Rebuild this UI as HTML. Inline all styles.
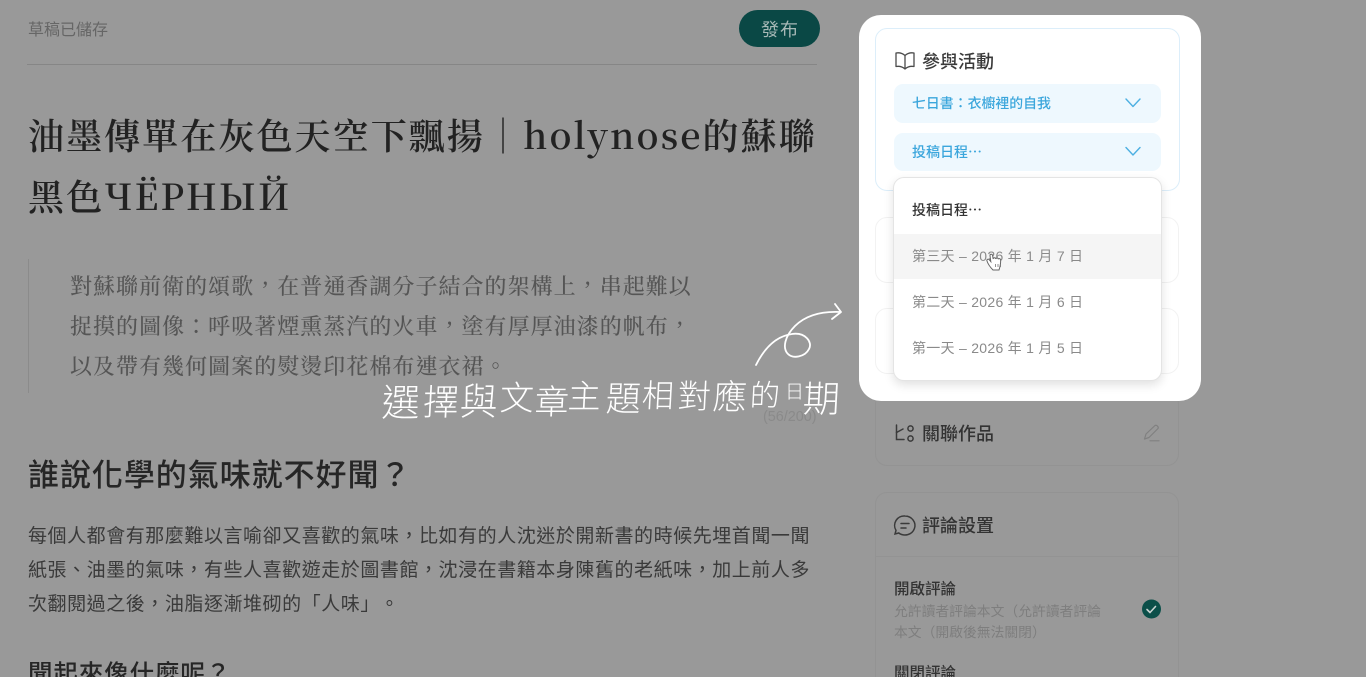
<!DOCTYPE html>
<html lang="zh-TW">
<head>
<meta charset="utf-8">
<title>草稿</title>
<style>
html,body{margin:0;padding:0;width:1366px;height:677px;overflow:hidden;background:#999;}
body{position:relative;font-family:"Liberation Sans","Noto Sans CJK TC",sans-serif;color:#2b2b2b;text-spacing-trim:space-all;}
.t{position:absolute;white-space:nowrap;line-height:1;filter:blur(.25px);}
.b{position:absolute;box-sizing:border-box;}
.serif{font-family:"Noto Serif CJK SC","Noto Serif CJK TC",serif;}
.sans{font-family:"Noto Sans CJK TC",sans-serif;}
svg{position:absolute;overflow:visible;}
.h{position:absolute;top:0;color:#fff;font-family:"Noto Sans CJK TC",sans-serif;font-weight:300;line-height:1;display:inline-block;}
</style>
</head>
<body>
<!-- main column -->
<div class="t sans" style="left:28px;top:20px;font-size:16px;color:#666;">草稿已儲存</div>
<div class="b" style="left:739px;top:10px;width:81px;height:37px;border-radius:19px;background:#0a4845;"></div>
<div class="t sans" style="left:761px;top:20px;font-size:18px;letter-spacing:1px;color:#a8b9b7;">發布</div>
<div class="b" style="left:27px;top:64px;width:790px;height:1px;background:#868686;"></div>

<div class="t serif" style="left:28px;top:113px;font-size:36px;letter-spacing:2.08px;color:#222;line-height:44px;font-weight:600;">油墨傳單在灰色天空下飄揚｜holynose的蘇聯</div>
<div class="t serif" style="left:28px;top:174px;font-size:36px;letter-spacing:2.08px;color:#222;line-height:44px;font-weight:600;">黑色ЧЁРНЫЙ</div>

<div class="b" style="left:28px;top:259px;width:1px;height:134px;background:#8b8b8b;"></div>
<div class="t serif" style="left:70px;top:272px;font-size:22px;letter-spacing:1.03px;line-height:28px;color:#555;font-weight:500;">對蘇聯前衛的頌歌，在普通香調分子結合的架構上，串起難以</div>
<div class="t serif" style="left:70px;top:312px;font-size:22px;letter-spacing:1.03px;line-height:28px;color:#555;font-weight:500;">捉摸的圖像：呼吸著煙熏蒸汽的火車，塗有厚厚油漆的帆布，</div>
<div class="t serif" style="left:70px;top:352px;font-size:22px;letter-spacing:1.03px;line-height:28px;color:#555;font-weight:500;">以及帶有幾何圖案的熨燙印花棉布連衣裙。</div>
<div class="t" style="left:763px;top:410px;font-size:14.400px;color:#8a8a8a;">(56/200)</div>

<div class="t sans" style="left:28px;top:455px;font-size:31px;letter-spacing:.95px;line-height:36px;font-weight:500;color:#262626;">誰說化學的氣味就不好聞？</div>
<div class="t sans" style="left:28px;top:521px;font-size:19px;letter-spacing:.55px;line-height:28px;color:#3a3a3a;">每個人都會有那麼難以言喻卻又喜歡的氣味，比如有的人沈迷於開新書的時候先埋首聞一聞</div>
<div class="t sans" style="left:28px;top:555px;font-size:19px;letter-spacing:.55px;line-height:28px;color:#3a3a3a;">紙張、油墨的氣味，有些人喜歡遊走於圖書館，沈浸在書籍本身陳舊的老紙味，加上前人多</div>
<div class="t sans" style="left:28px;top:589px;font-size:19px;letter-spacing:.55px;line-height:28px;color:#3a3a3a;">次翻閱過之後，油脂逐漸堆砌的「人味」。</div>
<div class="t sans" style="left:28px;top:658px;font-size:24.500px;letter-spacing:.9px;line-height:30px;font-weight:500;color:#262626;">聞起來像什麼呢？</div>

<!-- sidebar below modal -->
<div class="b" style="left:875px;top:392px;width:304px;height:74px;border:1px solid #939393;border-radius:12px;"></div>
<svg style="left:0;top:0" width="1366" height="677" fill="none">
  <g stroke="#3a3a3a" stroke-width="1.500" fill="none" stroke-linecap="round">
    <path d="M896.500 425V439.500H904"/><path d="M896.500 432.500L903 429"/>
    <circle cx="910.500" cy="428.500" r="2.600"/><circle cx="910.500" cy="438.500" r="2.600"/>
    <path d="M905 516a10 9.500 0 1 1-6.200 17l-3.800 1 1-3.600a9.500 9.500 0 0 1 9-14.400z"/>
    <path d="M901 523.500h8M901 528h5"/>
  </g>
  <g stroke="#808080" stroke-width="1.200" fill="none" stroke-linecap="round" stroke-linejoin="round">
    <path d="M1144.500 439l1.500-5L1155 425.500c1.500-1 4 1.500 3 3L1149 437.500z"/><path d="M1150 440.800h9"/>
  </g>
</svg>
<div class="t sans" style="left:922px;top:424px;font-size:18px;font-weight:500;color:#333;">關聯作品</div>

<div class="b" style="left:875px;top:492px;width:304px;height:200px;border:1px solid #939393;border-radius:12px;"></div>
<div class="b" style="left:875px;top:556px;width:304px;height:1px;background:#939393;"></div>
<div class="t sans" style="left:922px;top:516px;font-size:18px;font-weight:500;color:#333;">評論設置</div>
<div class="t sans" style="left:894px;top:581px;font-size:15.500px;font-weight:500;color:#333;">開啟評論</div>
<div class="t sans" style="left:894px;top:604px;font-size:13.800px;color:#7e7e7e;">允許讀者評論本文（允許讀者評論</div>
<div class="t sans" style="left:894px;top:625px;font-size:13.800px;color:#7e7e7e;">本文（開啟後無法關閉）</div>
<div class="t sans" style="left:894px;top:665px;font-size:15.500px;font-weight:500;color:#333;">關閉評論</div>
<svg style="left:0;top:0" width="1366" height="677" fill="none">
  <circle cx="1151.500" cy="609" r="9.500" fill="#0b4f49"/>
  <path d="M1147 609.500l3 3 5.500-6" stroke="#c8d4d2" stroke-width="1.600" fill="none" stroke-linecap="round" stroke-linejoin="round"/>
</svg>

<!-- modal -->
<div class="b" style="left:859px;top:15px;width:342px;height:386px;border-radius:22px;background:#fff;"></div>
<div class="b" style="left:875px;top:28px;width:305px;height:163px;border:1px solid #dceefa;border-radius:12px;background:#fff;"></div>
<div class="b" style="left:875px;top:217px;width:304px;height:66px;border:1px solid #f2f2f2;border-radius:12px;"></div>
<div class="b" style="left:875px;top:308px;width:304px;height:66px;border:1px solid #f2f2f2;border-radius:12px;"></div>

<svg style="left:0;top:0" width="1366" height="677" fill="none">
  <path d="M905 55.500C902 52.800 899 52.500 896 53V66.500C899 66 902 66.300 905 69C908 66.300 911 66 914 66.500V53C911 52.500 908 52.800 905 55.500ZM905 55.500V69" stroke="#4a4a4a" stroke-width="1.300" stroke-linejoin="round" fill="none"/>
</svg>
<div class="t sans" style="left:922px;top:52px;font-size:18px;font-weight:500;color:#3a3a3a;">參與活動</div>

<div class="b" style="left:894px;top:84px;width:267px;height:39px;border-radius:9px;background:#eef8fe;"></div>
<div class="t sans" style="left:912px;top:97px;font-size:13.900px;font-weight:500;color:#3ba6dc;">七日書：衣櫥裡的自我</div>
<div class="b" style="left:894px;top:133px;width:267px;height:38px;border-radius:9px;background:#eef8fe;"></div>
<div class="t sans" style="left:912px;top:145px;font-size:14px;font-weight:500;color:#3ba6dc;">投稿日程⋯</div>
<svg style="left:0;top:0" width="1366" height="677" fill="none">
  <path d="M1126 99l7 7.500 7-7.500M1126 147.500l7 7.500 7-7.500" stroke="#4db0e2" stroke-width="1.400" fill="none" stroke-linecap="round" stroke-linejoin="round"/>
</svg>

<div class="b" style="left:893px;top:177px;width:269px;height:204px;border:1px solid #e4e4e4;border-radius:11px;background:#fff;box-shadow:0 4px 10px rgba(0,0,0,.12);overflow:hidden;">
  <div class="b" style="left:0;top:56px;width:100%;height:45px;background:#f5f5f5;"></div>
</div>
<div class="t sans" style="left:912px;top:203px;font-size:14px;font-weight:500;color:#333;">投稿日程⋯</div>
<div class="t" style="left:912px;top:249px;font-size:14px;letter-spacing:.28px;color:#8a8a8a;">第三天 – 2026 年 1 月 7 日</div>
<div class="t" style="left:912px;top:295px;font-size:14px;letter-spacing:.28px;color:#8a8a8a;">第二天 – 2026 年 1 月 6 日</div>
<div class="t" style="left:912px;top:341px;font-size:14px;letter-spacing:.28px;color:#8a8a8a;">第一天 – 2026 年 1 月 5 日</div>

<!-- hand cursor -->
<svg style="left:0;top:0" width="1366" height="677" fill="none">
  <path d="M993 270c-2-2-5-6-6-9-.6-1.500 1.200-2.500 2.300-1.200l1.500 1.800-.8-6c-.2-1.600 2.200-2 2.500-.3l.7 3.700c0-1.700 2.500-1.700 2.600 0 .2-1.300 2.400-1.300 2.500.2.400-1 2.200-.8 2.300.7.200 3-.2 6-1.600 10.100z" fill="#fff" stroke="#666" stroke-width="1"/>
  <path d="M995.500 264v3M998 264v3M1000.500 264v3" stroke="#777" stroke-width=".8"/>
</svg>

<!-- arrow -->
<svg style="left:0;top:0" width="1366" height="677" fill="none">
  <path d="M756 365C765 347 777 336 792 334C805 332 813 342 809 349C805 357 793 359 788 354C782 348 785 336 795 326C806 315 822 311 841 312M835 304L841 312L832 319" stroke="#fff" stroke-width="1.800" fill="none" stroke-linecap="round" stroke-linejoin="round"/>
</svg>

<!-- handwritten caption -->
<div style="position:absolute;left:0;top:381px;width:1366px;height:44px;">
  <span class="h" style="left:382px;top:0;font-size:38px;transform:skewX(-3deg);">選</span>
  <span class="h" style="left:423px;top:1px;font-size:36px;transform:skewX(-3deg);">擇</span>
  <span class="h" style="left:460px;top:-1px;font-size:38px;transform:skewX(-3deg);">與</span>
  <span class="h" style="left:500px;top:-2px;font-size:34px;transform:skewX(-3deg);">文</span>
  <span class="h" style="left:535px;top:2px;font-size:34px;transform:skewX(-3deg);">章</span>
  <span class="h" style="left:568px;top:-3px;font-size:33px;transform:skewX(-3deg);">主</span>
  <span class="h" style="left:606px;top:-2px;font-size:35px;transform:skewX(-3deg);">題</span>
  <span class="h" style="left:642px;top:-3px;font-size:32px;transform:skewX(-3deg);">相</span>
  <span class="h" style="left:678px;top:-3px;font-size:33px;transform:skewX(-3deg);">對</span>
  <span class="h" style="left:713px;top:-3px;font-size:34px;transform:skewX(-3deg);">應</span>
  <span class="h" style="left:750px;top:-3px;font-size:30px;transform:skewX(-3deg);">的</span>
  <span class="h" style="left:785px;top:0;font-size:19px;">日</span>
  <span class="h" style="left:803px;top:-3px;font-size:37px;transform:skewX(-3deg);">期</span>
</div>
</body>
</html>
